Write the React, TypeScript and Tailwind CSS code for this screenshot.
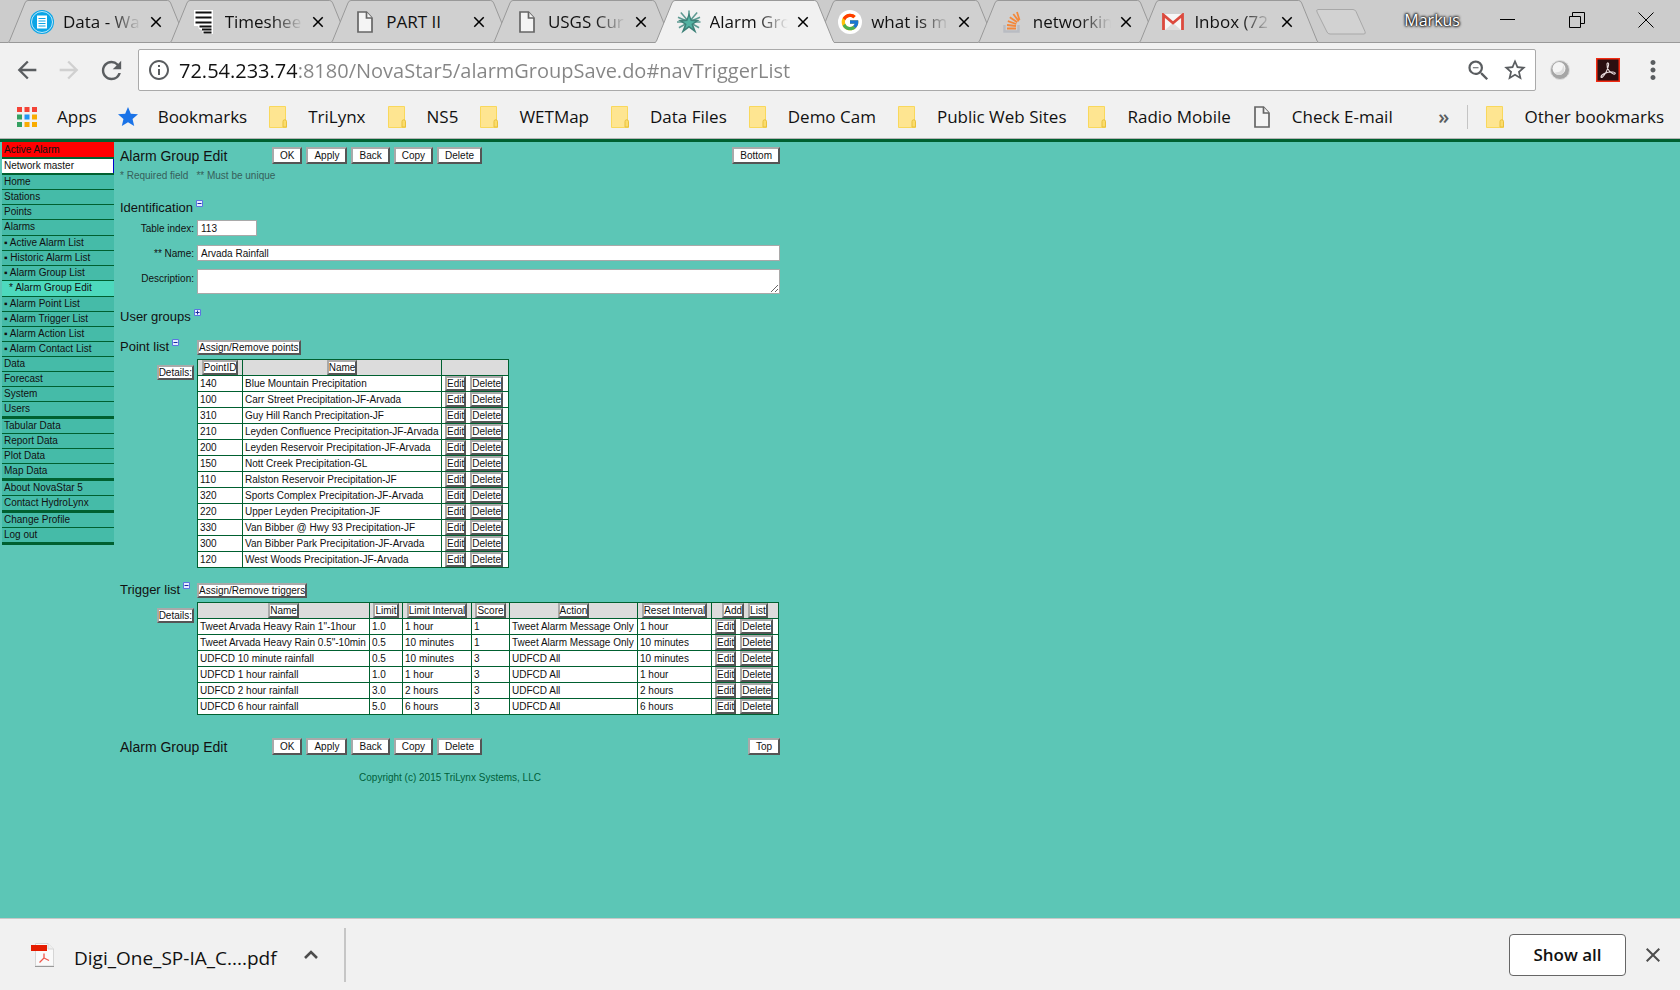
import type { ReactNode } from 'react';
import { FcGoogle } from 'react-icons/fc';
import { MdArrowBack, MdArrowForward, MdClose, MdInfoOutline, MdMoreVert, MdRefresh, MdStar, MdStarBorder, MdZoomOut } from 'react-icons/md';

/* ---------- Icons ---------- */

function FileIcon() {
  return (
    <svg width="18" height="24" viewBox="0 0 18 24" fill="#f4f4f4" stroke="#666" strokeWidth="1.700">
      <path d="M2 2h8.500L16 8v14H2z" />
      <path d="M10.500 2v6H16" />
    </svg>
  );
}

function FolderIcon() {
  return (
    <svg width="18" height="22" viewBox="0 0 18 22">
      <path d="M.5.5h16V15l1 1v5.500H.5z" fill="#fee591" stroke="#f9d85c" />
      <path d="M14 21v-5.500a1.700 1.700 0 0 1 3.500 0V21z" fill="#fbdc6c" stroke="#e9c13c" />
    </svg>
  );
}

function DataIcon() {
  return (
    <svg width="24" height="24" viewBox="0 0 24 24">
      <circle cx="12" cy="12" r="12" fill="#0ba5e6" />
      <circle cx="12" cy="12" r="10.500" fill="none" stroke="#bfe8fa" />
      <rect x="7" y="5.500" width="10" height="13" fill="#fff" />
      <path d="M8.500 8.500h7M8.500 11h7M8.500 13.500h7M8.500 16h7" stroke="#0ba5e6" />
    </svg>
  );
}

function TimesheetIcon() {
  return (
    <svg width="20" height="24" viewBox="0 0 20 24">
      <path d="M0 0h19v24H9l-1-4-3-1-1-3H0z" fill="#fff" />
      <path d="M1.500 2.500h16M1.500 7.500h16M1.500 12.500h16M5.500 16.500h12M8 19.500h9.500M9.500 22.500h8" stroke="#111" strokeWidth="2" />
    </svg>
  );
}

function NovaStarIcon() {
  return (
    <svg width="25" height="24" viewBox="0 0 25 24">
      <path d="M12.500 12 4 2M12.500 12 21 2M12.500 12 1 7M12.500 12 24 7M12.500 12H0M12.500 12h12M12.500 12 2 18M12.500 12l10.500 6M12.500 12V0" stroke="#5d9a92" strokeWidth="1.600" />
      <path d="m12.500 2 2.600 7.500 8.500.5-6.800 4.500 3.700 9.500-8-6-8 6 3.700-9.500L1 10l8.900-.5z" fill="#3d8178" />
      <path d="m12.500 6 1.700 5 4.800.5-4 2.500 1.500 5-4-3-4 3 1.500-5-4-2.500 4.800-.5z" fill="#54b3a3" />
    </svg>
  );
}

function GoogleIcon() {
  return (
    <span className="flex size-6 items-center justify-center rounded-full bg-white">
      <FcGoogle size={20} />
    </span>
  );
}

function StackIcon() {
  return (
    <svg width="18" height="22" viewBox="0 0 18 22" fill="none">
      <path d="M1.500 14v6.500h14V14" stroke="#b9bcc2" strokeWidth="2.400" />
      <path d="M4 17.500h9M4 14l9 1M4.800 10.200l8.500 2.800M6.800 6.200l7.400 5M10.300 3l5.500 7.200M14 1l2.500 8" stroke="#f4883a" strokeWidth="1.800" />
    </svg>
  );
}

function GmailIcon() {
  return (
    <svg width="22" height="18" viewBox="0 0 22 18">
      <path d="M1 1h20v16H1z" fill="#f6f6f6" />
      <path d="m3 17 8-7 8 7z" fill="#dedede" />
      <path d="M1.500 17V2l9.500 8 9.500-8v15" fill="none" stroke="#dc4a3e" strokeWidth="2.800" />
    </svg>
  );
}

function AppsIcon() {
  const colors = ['#f44336', '#f44336', '#f44336', '#34a061', '#2196f3', '#f9ab00', '#34a061', '#f9ab00', '#f9ab00'];
  return (
    <svg width="20" height="20" viewBox="0 0 20 20">
      {colors.map((fill, i) => (
        <rect key={i} x={(i % 3) * 7.5} y={Math.floor(i / 3) * 7.5} width="5" height="5" fill={fill} />
      ))}
    </svg>
  );
}

function AcrobatIcon() {
  return (
    <svg width="24" height="24" viewBox="0 0 24 24">
      <rect x=".75" y=".75" width="22.500" height="22.500" fill="#2a0f10" stroke="#f22a12" strokeWidth="1.500" />
      <path d="M5 19c0-2.500 6-5.500 12-5 3.500.5 2.500 2.500.5 2-3-1-7-5-6.500-10 .3-1.800 2-1.300 1.600 1C12 11 9 17 6.500 19c-.8.600-1.500.500-1.500 0z" fill="none" stroke="#e8dcdc" strokeWidth="1.100" />
    </svg>
  );
}

function PdfIcon() {
  return (
    <svg width="24" height="24" viewBox="0 0 24 24">
      <path d="M4.500.5H17l5.500 5.500v17h-18z" fill="#fafafa" stroke="#d6d6d6" />
      <path d="M17 .5V6h5.500" fill="#eee" stroke="#d6d6d6" />
      <path d="M4 23.500h19" stroke="#999" />
      <path d="M0 2h16v6H0z" fill="#e51c00" />
      <path d="M13 10.500v4.500l-4.500 4.500M13 15l5 2.500" fill="none" stroke="#f0564a" strokeWidth="1.300" />
    </svg>
  );
}

/* ---------- Browser frame ---------- */

interface Tab {
  title: string;
  icon: ReactNode;
  active?: boolean;
}

const tabs: Tab[] = [
  { title: 'Data - Wa', icon: <DataIcon /> },
  { title: 'Timeshee', icon: <TimesheetIcon /> },
  { title: 'PART II', icon: <FileIcon /> },
  { title: 'USGS Cur', icon: <FileIcon /> },
  { title: 'Alarm Gro', icon: <NovaStarIcon />, active: true },
  { title: 'what is m', icon: <GoogleIcon /> },
  { title: 'networkin', icon: <StackIcon /> },
  { title: 'Inbox (72', icon: <GmailIcon /> },
];

function TabStrip() {
  return (
    <div className="flex h-[43px] items-end border-b border-[#999] bg-[#cccccc] pl-2">
      <div className="flex max-w-[1293px] flex-1">
        {tabs.map((tab) => (
          <div
            key={tab.title}
            className={`relative -mb-px -mr-[18px] flex h-[43px] flex-1 items-center pl-[22px] ${tab.active ? 'z-10' : ''}`}
          >
            <svg className="absolute inset-0 h-full w-full" viewBox="0 0 180 43" preserveAspectRatio="none">
              <path
                d="M0 42.500 1.500 41 17 3Q18 .5 20 .5H160Q162 .5 163 3L178.500 41 180 42.500"
                fill={tab.active ? '#f1f1f1' : '#d0d0d0'}
                stroke="#999"
              />
              <path d="M1 42.500h178" stroke={tab.active ? '#f1f1f1' : '#999'} />
            </svg>
            <span className="relative flex w-6 justify-center">{tab.icon}</span>
            <button
              className={`relative ml-[9px] w-[78px] whitespace-nowrap text-left text-[17px] ${
                tab.title === 'PART II' ? '' : '[mask-image:linear-gradient(to_right,black_60%,transparent)]'
              }`}
            >
              {tab.title}
            </button>
            <button aria-label={`Close ${tab.title}`} className="relative ml-[6px] text-black">
              <MdClose size={18} />
            </button>
          </div>
        ))}
      </div>
      <button aria-label="New tab" className="mb-[7px] ml-[14px]">
        <svg width="52" height="26" viewBox="0 0 52 26">
          <path d="M3 .5h35q2 0 3 2l9 20q1 2.500-1 2.500H15q-2 0-3-2L2 3Q1 .5 3 .5z" fill="#d2d2d2" stroke="#a8a8a8" />
        </svg>
      </button>
      <div className="ml-auto flex items-center self-start pt-2 text-black">
        <span className="mr-10 text-[16px] leading-6 text-white [text-shadow:0_0_3px_#000,0_0_3px_#000,0_0_2px_#000]">Markus</span>
        <button aria-label="Minimize" className="mr-[53px]">
          <svg width="16" height="16" viewBox="0 0 16 16"><path d="M0 7.500h15" stroke="#000" /></svg>
        </button>
        <button aria-label="Restore" className="mr-[53px]">
          <svg width="16" height="16" viewBox="0 0 16 16" fill="none" stroke="#000"><path d="M.5 4.500h11v11H.5zM3.500 4V.5h12v11H12" /></svg>
        </button>
        <button aria-label="Close window" className="mr-[26px]">
          <svg width="16" height="16" viewBox="0 0 16 16" stroke="#000"><path d="m.5.5 15 15M15.500.5l-15 15" /></svg>
        </button>
      </div>
    </div>
  );
}

function Toolbar() {
  return (
    <div className="flex items-center pt-[6px] text-[#5a5d60]">
      <button aria-label="Back" className="ml-[13px]"><MdArrowBack size={28} /></button>
      <button aria-label="Forward" className="ml-[14px] text-[#d0d0d0]"><MdArrowForward size={28} /></button>
      <button aria-label="Reload" className="ml-[14px]"><MdRefresh size={29} /></button>
      <div className="ml-3 flex h-[42px] flex-1 items-center rounded-[2px] border border-[#aaa] bg-white pl-[8px] pr-[7px]">
        <MdInfoOutline size={24} />
        <input
          aria-label="Address"
          defaultValue="72.54.233.74:8180/NovaStar5/alarmGroupSave.do#navTriggerList"
          className="ml-2 h-9 flex-1 bg-[linear-gradient(to_right,#111_118px,#858585_118px)] bg-clip-text pt-px text-[20px] text-transparent outline-none"
        />
        <button aria-label="Zoom" className="mr-[10px]"><MdZoomOut size={27} /></button>
        <button aria-label="Bookmark this page"><MdStarBorder size={26} /></button>
      </div>
      <button aria-label="Extension" className="ml-[14px]">
        <svg width="20" height="20" viewBox="0 0 20 20">
          <circle cx="10" cy="10" r="9.500" fill="#a6a6a6" stroke="#ddd" />
          <circle cx="9" cy="8.500" r="6.500" fill="#f5f5f5" />
          <path d="M5 12c5 1 8-2 8-7 3 4 1 10-4 10-2 0-3-1-4-3z" fill="#ddd" />
        </svg>
      </button>
      <button aria-label="Adobe Acrobat" className="ml-[26px]"><AcrobatIcon /></button>
      <button aria-label="Menu" className="ml-[18px] mr-3"><MdMoreVert size={30} /></button>
    </div>
  );
}

const folders = ['TriLynx', 'NS5', 'WETMap', 'Data Files', 'Demo Cam', 'Public Web Sites', 'Radio Mobile'];

function BookmarksBar() {
  return (
    <div className="flex h-[48px] items-center gap-[22px] whitespace-nowrap border-b border-[#b4b4b4] pl-[17px] pr-[16px] pt-1 text-[17px]">
      <a href="#apps" className="flex items-center gap-[20px]"><AppsIcon />Apps</a>
      <a href="#bookmarks" className="-ml-[3px] flex items-center gap-[18px]">
        <MdStar size={24} color="#1a73e8" />
        Bookmarks
      </a>
      {folders.map((name) => (
        <a key={name} href="#folder" className="flex items-center gap-[21px]">
          <FolderIcon />
          {name}
        </a>
      ))}
      <a href="#mail" className="flex items-center gap-[21px]"><FileIcon />Check E-mail</a>
      <button aria-label="More bookmarks" className="ml-auto -mr-1 text-[20px] font-semibold text-[#5a5d60]">»</button>
      <a href="#other" className="flex h-6 items-center gap-[20px] border-l border-[#c4c4c4] pl-[18px]">
        <FolderIcon />
        Other bookmarks
      </a>
    </div>
  );
}

function DownloadBar() {
  return (
    <footer className="flex h-[72px] items-center border-t border-[#c8c8c8] bg-[#f1f1f1] pl-[31px] pr-[15px]">
      <PdfIcon />
      <span className="ml-[19px] pt-2 text-[19px]">Digi_One_SP-IA_C....pdf</span>
      <button aria-label="Download options" className="ml-[27px]">
        <svg width="14" height="9" viewBox="0 0 14 9" fill="none" stroke="#4d4d4d" strokeWidth="2.600"><path d="m1 8 6-6 6 6" /></svg>
      </button>
      <div className="ml-[26px] h-[54px] w-[2px] bg-[#c6c6c6]" />
      <button className="ml-auto h-[42px] w-[117px] rounded-[4px] border border-[#666] bg-white text-[17px] font-semibold">Show all</button>
      <button aria-label="Close downloads" className="ml-[15px] text-[#4d4d4d]"><MdClose size={24} /></button>
    </footer>
  );
}

/* ---------- NovaStar page ---------- */

interface NavItem {
  label: string;
  kind?: 'sub' | 'current';
  tall?: boolean;
  last?: boolean;
}

const navItems: NavItem[] = [
  { label: 'Home' },
  { label: 'Stations' },
  { label: 'Points' },
  { label: 'Alarms', tall: true },
  { label: 'Active Alarm List', kind: 'sub' },
  { label: 'Historic Alarm List', kind: 'sub' },
  { label: 'Alarm Group List', kind: 'sub' },
  { label: 'Alarm Group Edit', kind: 'current', tall: true },
  { label: 'Alarm Point List', kind: 'sub' },
  { label: 'Alarm Trigger List', kind: 'sub' },
  { label: 'Alarm Action List', kind: 'sub' },
  { label: 'Alarm Contact List', kind: 'sub' },
  { label: 'Data' },
  { label: 'Forecast' },
  { label: 'System' },
  { label: 'Users', last: true },
  { label: 'Tabular Data' },
  { label: 'Report Data' },
  { label: 'Plot Data' },
  { label: 'Map Data', last: true },
  { label: 'About NovaStar 5' },
  { label: 'Contact HydroLynx', last: true },
  { label: 'Change Profile' },
  { label: 'Log out', last: true },
];

function Sidebar() {
  return (
    <nav className="ml-[2px] flex w-[112px] shrink-0 flex-col text-[10px] leading-[14px]">
      <a href="#active" className="border-b-2 border-[#006030] bg-[#ff0000] pl-[2px] pt-px">Active Alarm</a>
      <a href="#network" className="border-b-2 border-[#006030] bg-white pl-[2px]">
        <span className="block border-r border-[#0000cc]">Network master</span>
      </a>
      {navItems.map((item) => (
        <a
          key={item.label}
          href="#nav"
          className={`border-[#006030] ${item.tall ? 'pb-px' : ''} ${item.last ? 'border-b-[3px]' : 'border-b'} ${
            item.kind === 'current' ? 'bg-[#4dd9bd] pl-[7px]' : 'bg-[#45bba8] pl-[2px]'
          }`}
        >
          {item.kind === 'sub' && '▪ '}
          {item.kind === 'current' && '* '}
          {item.label}
        </a>
      ))}
    </nav>
  );
}

function BigButton({ children }: { children: ReactNode }) {
  return (
    <button className="h-[17px] border-2 border-t-[#a9a9a9] border-l-[#a9a9a9] border-r-[#555] border-b-[#555] bg-white px-[6px] text-[10px] leading-[13px]">
      {children}
    </button>
  );
}

function SmallButton({ children }: { children: ReactNode }) {
  return (
    <button className="h-[15px] whitespace-nowrap border-2 border-t-[#a9a9a9] border-l-[#a9a9a9] border-r-[#555] border-b-[#555] bg-white text-[10px] leading-[11px]">
      {children}
    </button>
  );
}

function ActionRow({ jump }: { jump: string }) {
  return (
    <div className="flex h-[17px] items-center gap-1">
      <h1 className="w-[148px] text-[14px] leading-4">Alarm Group Edit</h1>
      <BigButton>OK</BigButton>
      <BigButton>Apply</BigButton>
      <BigButton>Back</BigButton>
      <BigButton>Copy</BigButton>
      <BigButton>Delete</BigButton>
      <div className="ml-auto flex">
        <BigButton>{jump}</BigButton>
      </div>
    </div>
  );
}

function SectionTitle({ title, open = true }: { title: string; open?: boolean }) {
  return (
    <h2 className="flex items-start gap-[3px] whitespace-nowrap text-[13px] leading-[17px]">
      {title}
      <button aria-label={`Toggle ${title}`} className="pt-px">
        <svg width="7" height="7" viewBox="0 0 7 7">
          <path d="M.5.5h6v6h-6z" fill="#e6ebff" stroke="#5b74e0" />
          <path d={open ? 'M1.500 3.500h4' : 'M1.500 3.500h4M3.500 1.500v4'} stroke="#1a2fa0" />
        </svg>
      </button>
    </h2>
  );
}

const points = [
  ['140', 'Blue Mountain Precipitation'],
  ['100', 'Carr Street Precipitation-JF-Arvada'],
  ['310', 'Guy Hill Ranch Precipitation-JF'],
  ['210', 'Leyden Confluence Precipitation-JF-Arvada'],
  ['200', 'Leyden Reservoir Precipitation-JF-Arvada'],
  ['150', 'Nott Creek Precipitation-GL'],
  ['110', 'Ralston Reservoir Precipitation-JF'],
  ['320', 'Sports Complex Precipitation-JF-Arvada'],
  ['220', 'Upper Leyden Precipitation-JF'],
  ['330', 'Van Bibber @ Hwy 93 Precipitation-JF'],
  ['300', 'Van Bibber Park Precipitation-JF-Arvada'],
  ['120', 'West Woods Precipitation-JF-Arvada'],
];

const triggers = [
  ['Tweet Arvada Heavy Rain 1"-1hour', '1.0', '1 hour', '1', 'Tweet Alarm Message Only', '1 hour'],
  ['Tweet Arvada Heavy Rain 0.5"-10min', '0.5', '10 minutes', '1', 'Tweet Alarm Message Only', '10 minutes'],
  ['UDFCD 10 minute rainfall', '0.5', '10 minutes', '3', 'UDFCD All', '10 minutes'],
  ['UDFCD 1 hour rainfall', '1.0', '1 hour', '3', 'UDFCD All', '1 hour'],
  ['UDFCD 2 hour rainfall', '3.0', '2 hours', '3', 'UDFCD All', '2 hours'],
  ['UDFCD 6 hour rainfall', '5.0', '6 hours', '3', 'UDFCD All', '6 hours'],
];

interface DataTableProps {
  columns: string[];
  widths: string[];
  rows: string[][];
  extra?: ReactNode;
}

function DataTable({ columns, widths, rows, extra }: DataTableProps) {
  return (
    <table className="table-fixed border-collapse bg-white text-[10px] leading-[13px]">
      <colgroup>
        {widths.map((w, i) => (
          <col key={i} className={w} />
        ))}
      </colgroup>
      <thead>
        <tr className="h-4 bg-[#dcdcdc]">
          {columns.map((c) => (
            <th key={c} className="border border-[#006030] p-0 font-normal">
              <div className="flex justify-center">
                <SmallButton>{c}</SmallButton>
              </div>
            </th>
          ))}
          <th className="border border-[#006030] p-0 font-normal">
            <div className="flex justify-center gap-1">{extra}</div>
          </th>
        </tr>
      </thead>
      <tbody>
        {rows.map((row) => (
          <tr key={row[0]} className="h-4">
            {row.map((cell, i) => (
              <td key={i} className="whitespace-nowrap border border-[#006030] p-0 pl-[2px]">{cell}</td>
            ))}
            <td className="border border-[#006030] p-0 pl-[3px]">
              <div className="flex gap-1">
                <SmallButton>Edit</SmallButton>
                <SmallButton>Delete</SmallButton>
              </div>
            </td>
          </tr>
        ))}
      </tbody>
    </table>
  );
}

function ListSection({ title, assign, children }: { title: string; assign: string; children: ReactNode }) {
  return (
    <section className="mt-[13px]">
      <div className="flex items-end">
        <div className="w-[77px]">
          <SectionTitle title={title} />
        </div>
        <SmallButton>{assign}</SmallButton>
      </div>
      <div className="mt-1 flex items-start">
        <div className="flex w-[77px] justify-end pr-[3px] pt-[6px]">
          <SmallButton>Details:</SmallButton>
        </div>
        {children}
      </div>
    </section>
  );
}

function AlarmGroupEdit() {
  return (
    <div className="ml-[6px] w-full max-w-[660px] pt-[5px] text-[10px]">
      <ActionRow jump="Bottom" />
      <p className="mt-[5px] flex gap-2 leading-[14px] text-[#35605a]">
        <span>* Required field</span>
        <span>** Must be unique</span>
      </p>

      <section className="mt-4">
        <SectionTitle title="Identification" />
        <div className="mt-1 flex items-center">
          <label htmlFor="tableIndex" className="w-[77px] pr-[3px] text-right">Table index:</label>
          <input id="tableIndex" defaultValue="113" className="h-4 w-[60px] border border-[#a9a9a9] bg-white pl-[3px] outline-none" />
        </div>
        <div className="mt-[9px] flex items-center">
          <label htmlFor="name" className="w-[77px] pr-[3px] text-right">** Name:</label>
          <input id="name" defaultValue="Arvada Rainfall" className="h-4 flex-1 border border-[#a9a9a9] bg-white pl-[3px] outline-none" />
        </div>
        <div className="mt-2 flex items-start">
          <label htmlFor="description" className="w-[77px] pr-[3px] pt-[2px] text-right">Description:</label>
          <textarea id="description" className="h-[25px] flex-1 resize border border-[#a9a9a9] bg-white outline-none" />
        </div>
      </section>

      <section className="mt-[14px]">
        <SectionTitle title="User groups" open={false} />
      </section>

      <ListSection title="Point list" assign="Assign/Remove points">
        <DataTable columns={['PointID', 'Name']} widths={['w-[45px]', 'w-[199px]', 'w-[67px]']} rows={points} />
      </ListSection>

      <ListSection title="Trigger list" assign="Assign/Remove triggers">
        <DataTable
          columns={['Name', 'Limit', 'Limit Interval', 'Score', 'Action', 'Reset Interval']}
          widths={['w-[172px]', 'w-[33px]', 'w-[69px]', 'w-[38px]', 'w-[128px]', 'w-[74px]', 'w-[67px]']}
          rows={triggers}
          extra={
            <>
              <SmallButton>Add</SmallButton>
              <SmallButton>List</SmallButton>
            </>
          }
        />
      </ListSection>

      <div className="mt-[23px]">
        <ActionRow jump="Top" />
      </div>
      <p className="mt-4 text-center leading-[14px] text-[#00603a]">Copyright (c) 2015 TriLynx Systems, LLC</p>
    </div>
  );
}

export default function App() {
  return (
    <div className="flex min-h-screen flex-col bg-[#5cc6b6] font-['Open_Sans',sans-serif] text-[#111]">
      <header className="bg-[#f1f1f1]">
        <TabStrip />
        <Toolbar />
        <BookmarksBar />
      </header>
      <main className="flex flex-1 items-start border-t-[3px] border-[#006030] font-['Liberation_Sans',Arial,sans-serif]">
        <Sidebar />
        <AlarmGroupEdit />
      </main>
      <DownloadBar />
    </div>
  );
}
